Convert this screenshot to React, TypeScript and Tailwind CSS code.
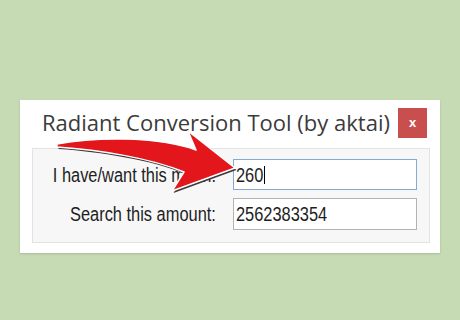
import React from "react";

const Arrow = () => (
	<svg
		className="absolute inset-0 pointer-events-none"
		width={460}
		height={320}
		viewBox="0 0 460 320"
	>
		<path
			d="M57 144 C100 136 160 137 196 150 L188 131 L235 168 L172 191 L184 172 C150 158 100 150 57 147 Z"
			fill="#3a3a3a"
			transform="translate(1.5 2)"
		/>
		<path
			d="M57 144 C100 136 160 137 196 150 L188 131 L235 168 L172 191 L184 172 C150 158 100 150 57 147 Z"
			fill="#e3161b"
			stroke="#ffffff"
			strokeWidth={1.5}
			strokeLinejoin="round"
		/>
	</svg>
);

export default function App() {
	return (
		<div className="relative w-[460px] h-[320px] bg-[#c6dbb4] overflow-hidden pt-[100px] pl-[20px]">
			<div className="w-[420px] h-[153px] bg-white flex flex-col shadow-[0_1px_2px_rgba(0,0,0,0.15)]">
				<div className="h-[48px] flex items-start justify-between pl-[22px] pr-[13px]">
					<span className="mt-[7px] text-[22px] leading-[30px] text-[#3b3b3b] font-['Open_Sans',sans-serif] whitespace-nowrap">
						Radiant Conversion Tool (by aktai)
					</span>
					<div className="mt-[8px] w-[29px] h-[30px] shrink-0 bg-[#c94f4f] flex items-center justify-center text-white text-[13px] font-bold font-['Liberation_Sans',sans-serif]">
						x
					</div>
				</div>
				<div className="ml-[12px] mr-[10px] h-[95px] bg-[#f7f7f7] border border-[#e3e3e3] grid grid-cols-[183px_184px] gap-x-[17px] gap-y-[8px] content-start pt-[10px]">
					<div className="h-[31px] flex items-center justify-end">
						<span className="inline-block origin-right scale-x-[0.82] text-[20px] text-[#1e1e1e] font-['Liberation_Sans',sans-serif] whitespace-nowrap">
							I have/want this much:
						</span>
					</div>
					<div className="h-[31px] border border-[#84a9d3] bg-white flex items-center pl-[2px]">
						<span className="inline-block origin-left scale-x-[0.82] text-[20px] text-[#1e1e1e] font-['Liberation_Sans',sans-serif]">
							260
						</span>
						<span className="w-px h-[18px] bg-black -ml-[5px]" />
					</div>
					<div className="h-[32px] flex items-center justify-end">
						<span className="inline-block origin-right scale-x-[0.82] text-[20px] text-[#1e1e1e] font-['Liberation_Sans',sans-serif] whitespace-nowrap">
							Search this amount:
						</span>
					</div>
					<div className="h-[32px] border border-[#b3b3b3] bg-white flex items-center pl-[2px]">
						<span className="inline-block origin-left scale-x-[0.82] text-[20px] text-[#1e1e1e] font-['Liberation_Sans',sans-serif]">
							2562383354
						</span>
					</div>
				</div>
			</div>
			<Arrow />
		</div>
	);
}
